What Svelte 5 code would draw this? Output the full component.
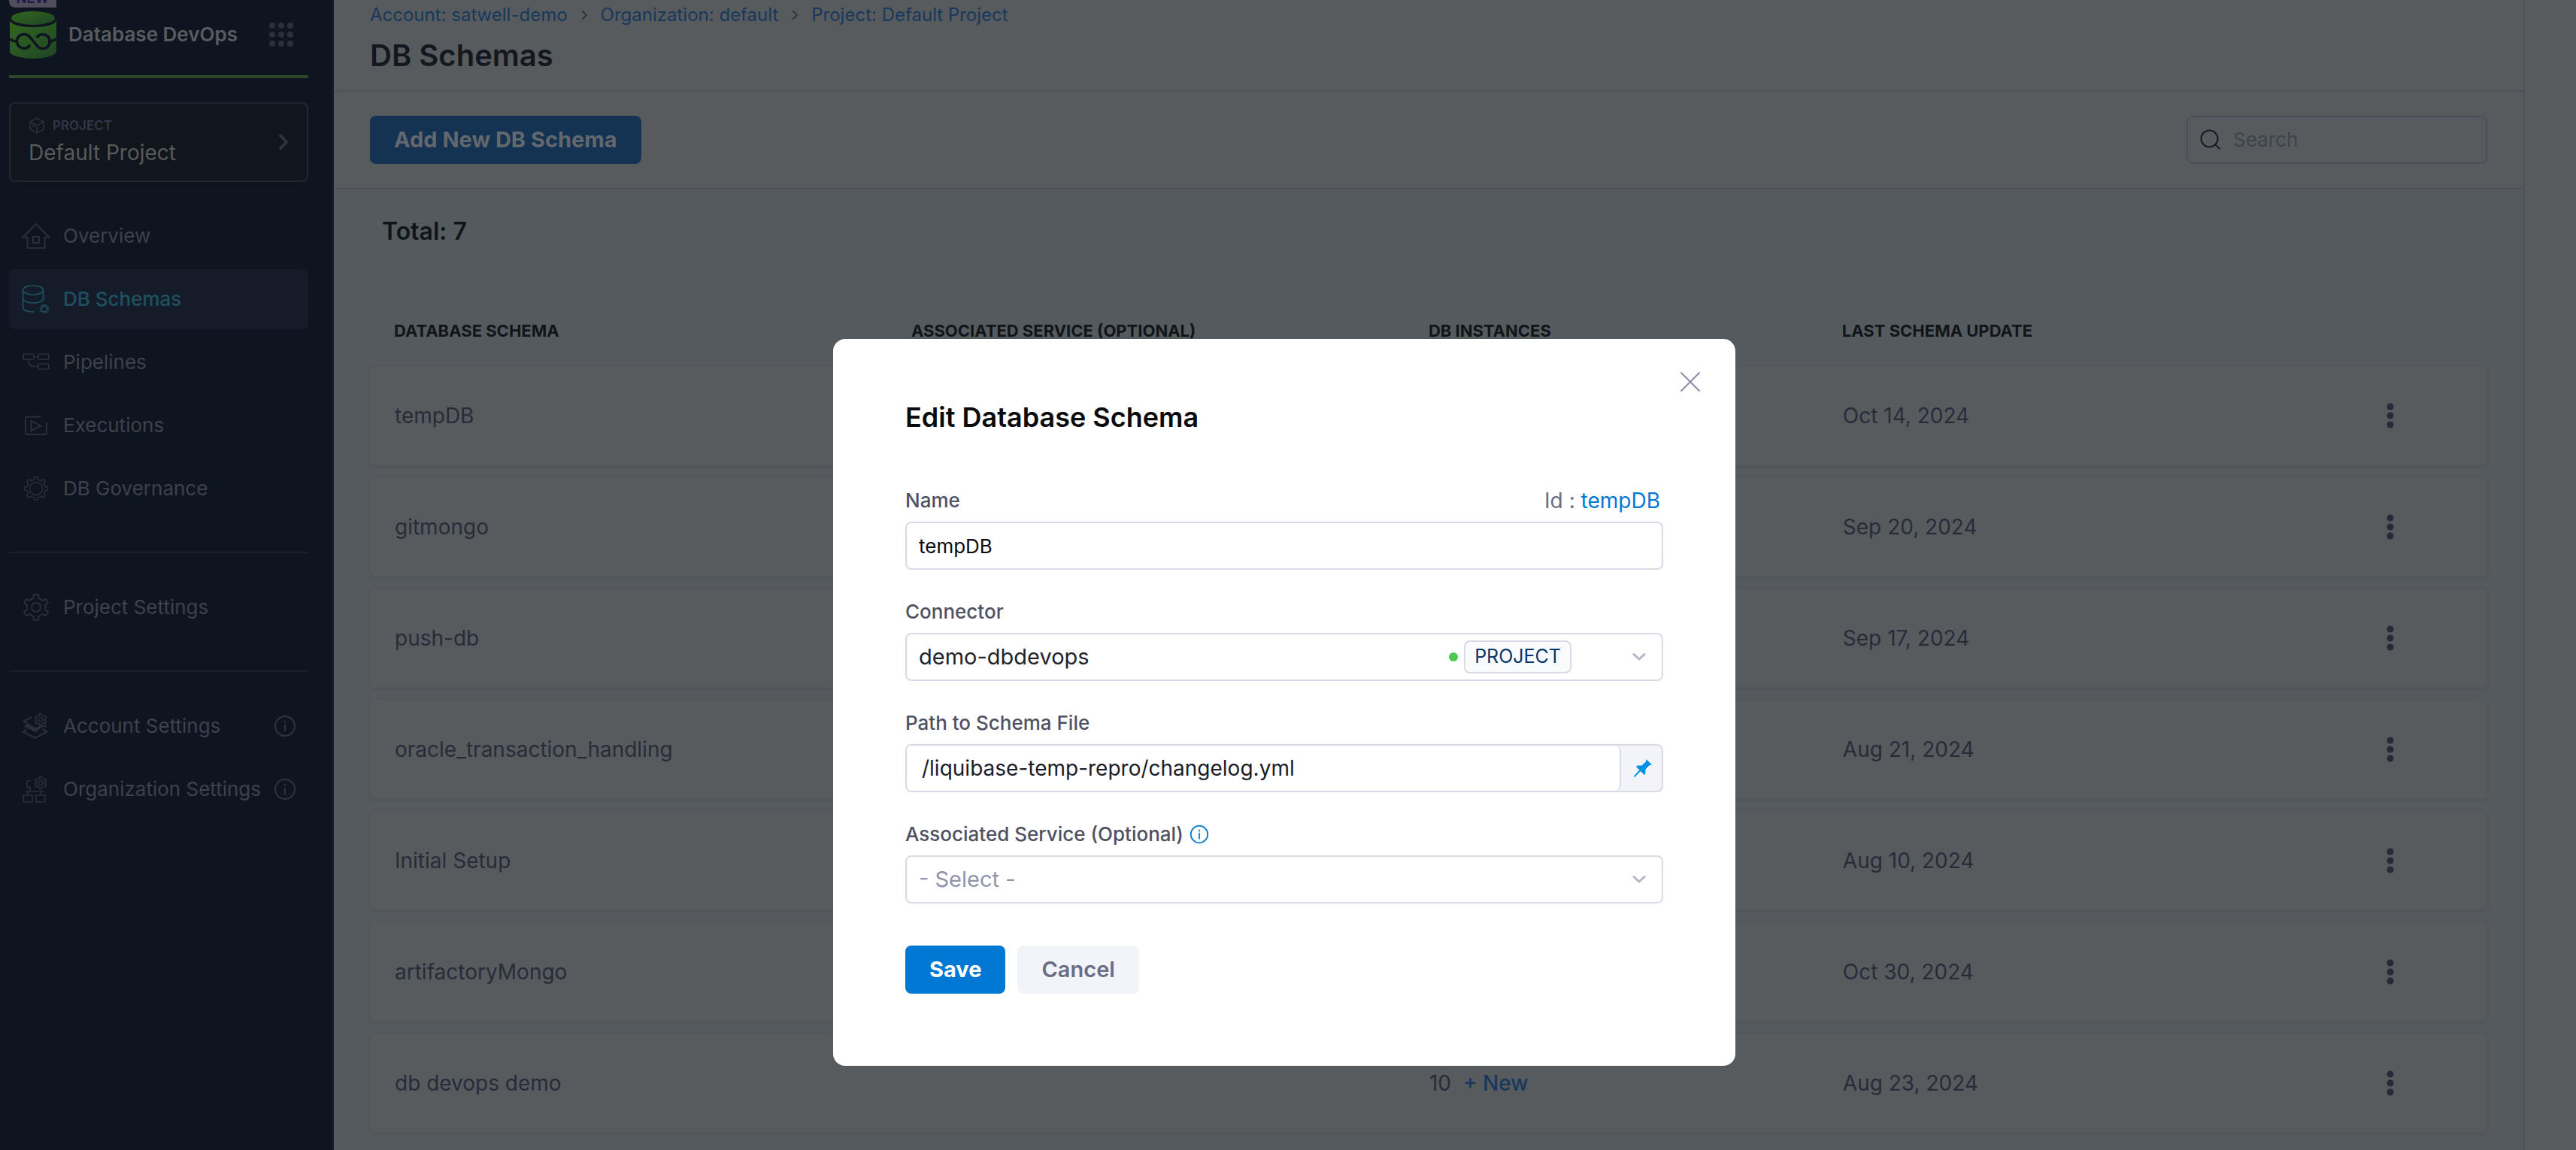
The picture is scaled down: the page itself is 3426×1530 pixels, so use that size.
<script lang="ts">
  let name = $state('tempDB');
  let connector = $state('demo-dbdevops');
  let path = $state('/liquibase-temp-repro/changelog.yml');
  let service = $state('');
  let query = $state('');

  const mainNav = [
    { icon: 'home', label: 'Overview' },
    { icon: 'schemas', label: 'DB Schemas', active: true },
    { icon: 'pipelines', label: 'Pipelines' },
    { icon: 'executions', label: 'Executions' },
    { icon: 'governance', label: 'DB Governance' }
  ];
  const projectNav = [{ icon: 'settings', label: 'Project Settings' }];
  const accountNav = [
    { icon: 'account', label: 'Account Settings', info: true },
    { icon: 'organization', label: 'Organization Settings', info: true }
  ];
  const crumbs = ['Account: satwell-demo', 'Organization: default', 'Project: Default Project'];
  const schemas = [
    { name: 'tempDB', updated: 'Oct 14, 2024' },
    { name: 'gitmongo', updated: 'Sep 20, 2024' },
    { name: 'push-db', updated: 'Sep 17, 2024' },
    { name: 'oracle_transaction_handling', updated: 'Aug 21, 2024' },
    { name: 'Initial Setup', updated: 'Aug 10, 2024' },
    { name: 'artifactoryMongo', updated: 'Oct 30, 2024' },
    { name: 'db devops demo', instances: 10, updated: 'Aug 23, 2024' }
  ];

  // Outline of a cog with `teeth` teeth around (cx, cy).
  function gear(cx: number, cy: number, outer: number, inner: number, teeth: number) {
    const step = (Math.PI * 2) / teeth;
    const at = (r: number, a: number) =>
      `${(cx + r * Math.sin(a)).toFixed(2)} ${(cy - r * Math.cos(a)).toFixed(2)}`;
    let d = '';
    for (let i = 0; i < teeth; i++) {
      const a = i * step;
      d += `${i ? 'L' : 'M'}${at(inner, a - step * 0.27)}L${at(outer, a - step * 0.17)}`;
      d += `A${outer} ${outer} 0 0 1 ${at(outer, a + step * 0.17)}L${at(inner, a + step * 0.27)}`;
      d += `A${inner} ${inner} 0 0 1 ${at(inner, a + step * 0.73)}`;
    }
    return d + 'Z';
  }
</script>

{#snippet navIcon(kind)}
  <svg class="nav-icon" viewBox="0 0 40 40" aria-hidden="true">
    {#if kind === 'home'}
      <path d="M20 4 2.500 21.500H8.500V36H31.500V21.500H37.500Z" /><rect x="16" y="21" width="8" height="8" />
    {:else if kind === 'schemas'}
      <g stroke-width="1.700">
        <ellipse cx="16" cy="8" rx="13.500" ry="6" />
        <path d="M2.500 8V31C2.500 34.500 8 36.800 17 36.800M29.500 8V21M2.500 19C2.500 27 29.500 27 29.500 19" />
        <circle cx="31" cy="33" r="3.800" />
        <circle cx="31" cy="33" r="5.500" stroke-dasharray="2.160 2.160" />
      </g>
    {:else if kind === 'pipelines'}
      <g stroke-width="1.700">
        <rect x="3" y="9" width="14" height="7" rx="1" /><rect x="23" y="9" width="14" height="7" rx="1" />
        <rect x="23" y="22" width="14" height="7" rx="1" />
        <path d="M17 12.500H23M10.500 16V20Q10.500 25.500 16 25.500H23" />
      </g>
    {:else if kind === 'executions'}
      <path d="M26 8.500H9Q6 8.500 6 11.500V29Q6 32 9 32H31Q34 32 34 29V16" />
      <path d="M13.500 14V27L26.500 20.500Z" />
    {:else if kind === 'governance'}
      <g stroke-width="1.500"><path d={gear(20, 20, 15.5, 12, 8)} /><circle cx="20" cy="20" r="8.500" /></g>
    {:else if kind === 'settings'}
      <g><path d={gear(20, 20, 17, 12.5, 6)} /><circle cx="20" cy="20" r="6" /></g>
    {:else if kind === 'account'}
      <g stroke-width="1.600">
        <path d={gear(26, 11.5, 8, 6, 6)} /><circle cx="26" cy="11.500" r="2.800" />
        <path d="M14 8 4 13.500 9 17" stroke-width="2.400" />
        <path class="solid" d="M3 20 11 17 18 22 27 20 33 18 19 28Z" />
        <path d="M7 24 3 27.500 19 36 34 27.500 29 24M30 19.500 34 21" stroke-width="2.200" />
      </g>
    {:else}
      <g stroke-width="1.600">
        <path d={gear(26, 11.5, 8, 6, 6)} /><circle cx="26" cy="11.500" r="2.800" />
        <path d="M13 9H8V17.500H13M12 18V22M6 23H30M9 23V27M26 23V27" />
        <rect x="3" y="28" width="12" height="9" /><rect x="20" y="28" width="12" height="9" />
      </g>
    {/if}
  </svg>
{/snippet}

{#snippet infoIcon()}
  <svg class="info" viewBox="0 0 30 30" aria-hidden="true">
    <circle cx="15" cy="15" r="13" /><path d="M15 13.500V21.500" /><path d="M15 8.600V10" />
  </svg>
{/snippet}

{#snippet navList(items)}
  <ul>
    {#each items as item}
      <li>
        <a href="#{item.icon}" class="nav-item" class:active={item.active}>
          {@render navIcon(item.icon)}
          <span>{item.label}</span>
          {#if item.info}{@render infoIcon()}{/if}
        </a>
      </li>
    {/each}
  </ul>
{/snippet}

{#snippet caret()}
  <svg class="caret" viewBox="0 0 20 12" aria-hidden="true"><path d="M3 2.500 10 9 17 2.500" /></svg>
{/snippet}

<div class="app">
  <aside>
    <div class="brand-badge"><span>NEW</span></div>
    <div class="brand">
      <svg class="logo" viewBox="0 0 62 63" aria-hidden="true">
        <defs>
          <linearGradient id="drum" x1="0" y1="0" x2="1" y2="1">
            <stop offset="0" stop-color="#33661f" /><stop offset="1" stop-color="#1f4526" />
          </linearGradient>
        </defs>
        <ellipse cx="31" cy="9" rx="29" ry="9" fill="url(#drum)" />
        <path d="M0 13C6 24 56 24 62 13V55C52 65.500 10 65.500 0 55Z" fill="url(#drum)" />
        <path class="loop" d="M0 37Q5 40.500 11 40.500M62 37Q57 40.500 51 40.500M27 45A9.500 9.500 0 1 1 26 33.500L36 45.500A9.500 9.500 0 1 0 36 35" />
      </svg>
      <span class="brand-name">Database DevOps</span>
      <button class="modules" aria-label="All modules">
        <svg viewBox="0 0 32 32" aria-hidden="true">
          {#each [4, 16, 28] as y}{#each [4, 16, 28] as x}<circle cx={x} cy={y} r="4" />{/each}{/each}
        </svg>
      </button>
    </div>
    <button class="scope">
      <span class="scope-text">
        <span class="scope-kind">
          <svg viewBox="0 0 22 22" aria-hidden="true"><path d="M11 1 20 6V16L11 21 2 16V6ZM2 6 11 11 20 6M11 11V21M5 11 8 12.700" /></svg>
          PROJECT
        </span>
        <span class="scope-name">Default Project</span>
      </span>
      <svg class="scope-arrow" viewBox="0 0 14 22" aria-hidden="true"><path d="M3 2.500 11 11 3 19.500" /></svg>
    </button>
    <nav>
      {@render navList(mainNav)}
      <hr />
      {@render navList(projectNav)}
      <hr />
      {@render navList(accountNav)}
    </nav>
  </aside>

  <main>
    <header>
      <nav class="crumbs" aria-label="Breadcrumb">
        {#each crumbs as crumb, i}
          {#if i}
            <svg viewBox="0 0 10 16" aria-hidden="true"><path d="M2 2 8 8 2 14" /></svg>
          {/if}
          <a href="#crumb-{i}">{crumb}</a>
        {/each}
      </nav>
      <h1>DB Schemas</h1>
    </header>
    <div class="toolbar">
      <button class="add">Add New DB Schema</button>
      <label class="search">
        <svg viewBox="0 0 28 28" aria-hidden="true"><circle cx="12.500" cy="12.500" r="11" /><path d="M20 20 26.500 26.500" /></svg>
        <input type="search" placeholder="Search" aria-label="Search" bind:value={query} />
      </label>
    </div>
    <section class="list">
      <p class="total">Total: {schemas.length}</p>
      <table>
        <thead>
          <tr>
            <th class="c-name">DATABASE SCHEMA</th>
            <th class="c-service">ASSOCIATED SERVICE (OPTIONAL)</th>
            <th class="c-count">DB INSTANCES</th>
            <th>LAST SCHEMA UPDATE</th>
            <th class="c-menu"></th>
          </tr>
        </thead>
        <tbody>
          {#each schemas as schema}
            <tr>
              <td>{schema.name}</td>
              <td></td>
              <td>{#if schema.instances}{schema.instances}<a class="new" href="#new">+ New</a>{/if}</td>
              <td>{schema.updated}</td>
              <td>
                <button class="more" aria-label="Options for {schema.name}">
                  <svg viewBox="0 0 10 34" aria-hidden="true">
                    <circle cx="5" cy="5" r="4.500" /><circle cx="5" cy="17" r="4.500" /><circle cx="5" cy="29" r="4.500" />
                  </svg>
                </button>
              </td>
            </tr>
          {/each}
        </tbody>
      </table>
    </section>
  </main>
  <div class="rail"></div>
</div>

<div class="overlay">
  <div class="dialog" role="dialog" aria-modal="true" aria-labelledby="dialog-title">
    <button class="close" aria-label="Close">
      <svg viewBox="0 0 28 28" aria-hidden="true"><path d="M1.500 1.500 26.500 26.500M26.500 1.500 1.500 26.500" /></svg>
    </button>
    <h2 id="dialog-title">Edit Database Schema</h2>
    <form onsubmit={(e) => e.preventDefault()}>
      <div class="field">
        <div class="label-row">
          <label for="name">Name</label>
          <span class="ident">Id : <a href="#id">{name}</a></span>
        </div>
        <input class="box name" id="name" type="text" bind:value={name} />
      </div>
      <div class="field">
        <div class="label-row"><label for="connector">Connector</label></div>
        <div class="picker">
          <select class="box" id="connector" bind:value={connector}>
            <option>demo-dbdevops</option>
          </select>
          <span class="extras"><i class="dot"></i><span class="tag">PROJECT</span>{@render caret()}</span>
        </div>
      </div>
      <div class="field">
        <div class="label-row"><label for="path">Path to Schema File</label></div>
        <div class="box pinned">
          <input id="path" type="text" bind:value={path} />
          <button type="button" class="pin" aria-label="Fixed value">
            <svg viewBox="0 0 24 24" aria-hidden="true">
              <path d="M16.500 0 24 7.500 20.500 8.300 15.500 13.500 15.300 19.500 14 21 9 16 1 24 0 23.500 0 22.500 7.500 14.500 3 10 4.500 8.500 10.500 8.500 15.800 3.500Z" />
            </svg>
          </button>
        </div>
      </div>
      <div class="field">
        <div class="label-row">
          <label for="service">Associated Service (Optional)</label>
          {@render infoIcon()}
        </div>
        <div class="picker">
          <select class="box" class:empty={!service} id="service" bind:value={service}>
            <option value="">- Select -</option>
          </select>
          <span class="extras">{@render caret()}</span>
        </div>
      </div>
      <div class="actions">
        <button class="save" type="submit">Save</button>
        <button class="cancel" type="button">Cancel</button>
      </div>
    </form>
  </div>
</div>

<style>
  :global(body) { margin: 0; background: #575b5e; overflow: hidden; }
  * { box-sizing: border-box; }
  svg { fill: none; stroke: currentColor; stroke-width: 2; display: block; flex: none; }
  button { font: inherit; border: 0; background: none; padding: 0; cursor: pointer; }
  input, select { font: inherit; outline: 0; }
  a { color: inherit; text-decoration: none; }
  ul { list-style: none; margin: 0; padding: 0; display: grid; gap: 4px; }

  .app, .overlay { font-family: Inter, "Liberation Sans", sans-serif; font-size: 26px; line-height: 32px; }
  .app { display: flex; height: 100vh; overflow: hidden; color: #292b3a; }

  aside { flex: none; width: 444px; padding: 0 32px 0 12px; background: #0e1520; border-right: 2px solid #191e26; }
  .brand-badge { width: 63px; height: 10px; padding-bottom: 4px; overflow: hidden; border-radius: 0 0 0 8px; background: #504e5b; color: #241a4c; font-size: 18px; font-weight: 700; display: flex; justify-content: center; align-items: flex-end; }
  .brand-badge span { line-height: 16px; }
  .brand { display: flex; align-items: center; height: 94px; padding-bottom: 18px; padding-right: 20px; border-bottom: 4px solid #2b4727; }
  .logo { width: 62px; height: 63px; margin-left: 1px; stroke: none; }
  .logo .loop { stroke: #0e1520; stroke-width: 3.500; fill: none; }
  .brand-name { margin-left: 16px; font-weight: 600; color: #585b5f; white-space: nowrap; }
  .modules { margin-left: auto; }
  .modules svg { width: 32px; height: 32px; fill: #2c2f3b; stroke: none; }

  .scope { display: flex; align-items: center; justify-content: space-between; width: 100%; height: 106px; margin: 32px 0; padding: 0 24px; border: 2px solid #22262e; border-radius: 8px; background: #11151c; text-align: left; }
  .scope-text, .scope-name { display: block; }
  .scope-kind { display: flex; align-items: center; gap: 10px; font-size: 17px; line-height: 24px; font-weight: 600; color: #33374a; }
  .scope-kind svg { width: 22px; height: 22px; stroke: #2c303b; stroke-width: 1.500; }
  .scope-name { margin-top: 4px; font-size: 28px; line-height: 40px; color: #585b5e; }
  .scope-arrow { width: 14px; height: 22px; color: #30333e; stroke-width: 4; stroke-linecap: round; }

  .nav-item { display: flex; align-items: center; height: 80px; padding: 0 16px; border-radius: 8px; color: #3f414b; }
  .nav-item.active { background: #151c29; color: #1f5062; font-weight: 500; }
  .nav-icon { width: 40px; height: 40px; margin-right: 16px; color: #2b2e39; }
  .active .nav-icon { color: #1f5062; }
  .solid { fill: currentColor; stroke: none; }
  .info { width: 30px; height: 30px; stroke-width: 2; stroke-linecap: round; }
  .nav-item .info { margin-left: auto; color: #30333e; }
  hr { height: 2px; margin: 44px 0 32px; border: 0; background: #1b1f27; }

  main { flex: 1; min-width: 0; background: #555a5e; }
  header { height: 122px; padding: 4px 48px 0; background: #575b5d; border-bottom: 2px solid #4e515a; }
  .crumbs { display: flex; align-items: center; gap: 17px; font-size: 24px; color: #17385c; }
  .crumbs svg { width: 10px; height: 16px; stroke: #33363e; }
  h1 { margin: 14px 0 0; font-size: 40px; line-height: 48px; font-weight: 600; color: #14171f; }
  .toolbar { display: flex; align-items: center; justify-content: space-between; height: 130px; padding: 0 48px; background: #575b5d; border-bottom: 2px solid #4e515a; }
  .add { height: 64px; padding: 0 32px; border-radius: 8px; background: #143252; color: #62686e; font-size: 29px; font-weight: 700; }
  .search { display: flex; align-items: center; gap: 16px; width: 400px; height: 64px; padding: 0 16px; border: 2px solid #4d505a; border-radius: 8px; }
  .search svg { width: 28px; height: 28px; color: #171b26; }
  .search input { flex: 1; min-width: 0; padding: 0; border: 0; background: none; }
  .search input::placeholder { color: #3c434c; opacity: 1; }

  .list { padding: 34px 48px; }
  .total { margin: 0 0 0 16px; font-size: 32px; line-height: 44px; font-weight: 600; color: #10151a; }
  table { width: 100%; table-layout: fixed; border-collapse: separate; border-spacing: 0 16px; margin-top: 57px; }
  th { height: 68px; padding: 6px 0 0 32px; font-size: 22px; font-weight: 700; line-height: 28px; text-align: left; white-space: nowrap; color: #10151a; }
  .c-name, .c-service { width: 24.43%; }
  .c-count { width: 19.53%; }
  .c-menu { width: 160px; }
  tbody tr { box-shadow: 0 1px 4px #4d5157; border-radius: 8px; }
  td { height: 132px; padding: 0 0 0 33px; background: #575b5d; font-size: 28px; }
  td:first-child { border-radius: 8px 0 0 8px; }
  td:last-child { border-radius: 0 8px 8px 0; padding-left: 26px; }
  .new { margin-left: 16px; color: #17385c; font-weight: 500; }
  .more { display: block; color: #262938; }
  .more svg { width: 10px; height: 34px; fill: currentColor; stroke: none; }
  .rail { flex: none; width: 70px; border-left: 2px solid #4e515a; background: #575b5d; }

  .overlay { position: fixed; inset: 0; display: flex; justify-content: center; align-items: flex-start; padding: 451px 10px 0 0; }
  .dialog { position: relative; width: 1200px; padding: 80px 96px 96px; border-radius: 16px; background: #fff; color: #22222a; }
  .close { position: absolute; top: 43px; right: 46px; color: #8c8ba7; }
  .close svg { width: 28px; height: 28px; }
  h2 { margin: 0 0 71px; font-size: 36px; line-height: 48px; font-weight: 600; color: #0b0b0d; }
  .field { margin-bottom: 40px; }
  .label-row { display: flex; align-items: center; gap: 8px; height: 32px; margin-bottom: 12px; color: #4f5162; font-weight: 500; }
  .label-row .info { width: 26px; height: 26px; color: #0278d5; }
  .ident { margin-left: auto; margin-right: 4px; color: #6b6d85; font-size: 28px; font-weight: 400; }
  .ident a { color: #0278d5; }
  .box { width: 100%; height: 64px; padding: 0 16px; border: 2px solid #d9dae5; border-radius: 8px; background: #fff; color: #22222a; }
  .name { color: #0b0b0d; }
  .picker { display: grid; align-items: center; }
  .picker > * { grid-area: 1 / 1; }
  .picker select { appearance: none; font-size: 29px; }
  .picker select.empty { color: #9293ab; }
  .extras { display: flex; align-items: center; justify-content: flex-end; padding-right: 22px; pointer-events: none; }
  .dot { width: 12px; height: 12px; margin-right: 8px; border-radius: 50%; background: #4dc952; }
  .tag { height: 44px; margin-right: 80px; padding: 0 12px; border: 2px solid #d9dae5; border-radius: 8px; background: #fafbfc; color: #07346a; font-size: 25px; line-height: 38px; }
  .caret { width: 20px; height: 12px; color: #b4b5c3; stroke-width: 3; stroke-linecap: round; stroke-linejoin: round; }
  .pinned { display: flex; padding: 0; overflow: hidden; background: #f3f3fa; }
  .pinned input { flex: 1; min-width: 0; padding: 0 20px; border: 0; border-right: 2px solid #d9dae5; border-radius: 0 8px 8px 0; background: #fff; color: #1c1c28; font-size: 28px; }
  .pin { width: 54px; padding-left: 4px; display: grid; place-items: center; color: #0092e4; }
  .pin svg { width: 24px; height: 24px; fill: currentColor; stroke: none; }
  .actions { display: flex; gap: 16px; margin-top: 56px; }
  .actions button { height: 64px; padding: 0 32px; border-radius: 8px; font-size: 29px; font-weight: 700; }
  .save { background: #0278d5; color: #fff; }
  .actions .cancel { background: #f3f3fa; color: #6b6d85; font-weight: 600; }
</style>
